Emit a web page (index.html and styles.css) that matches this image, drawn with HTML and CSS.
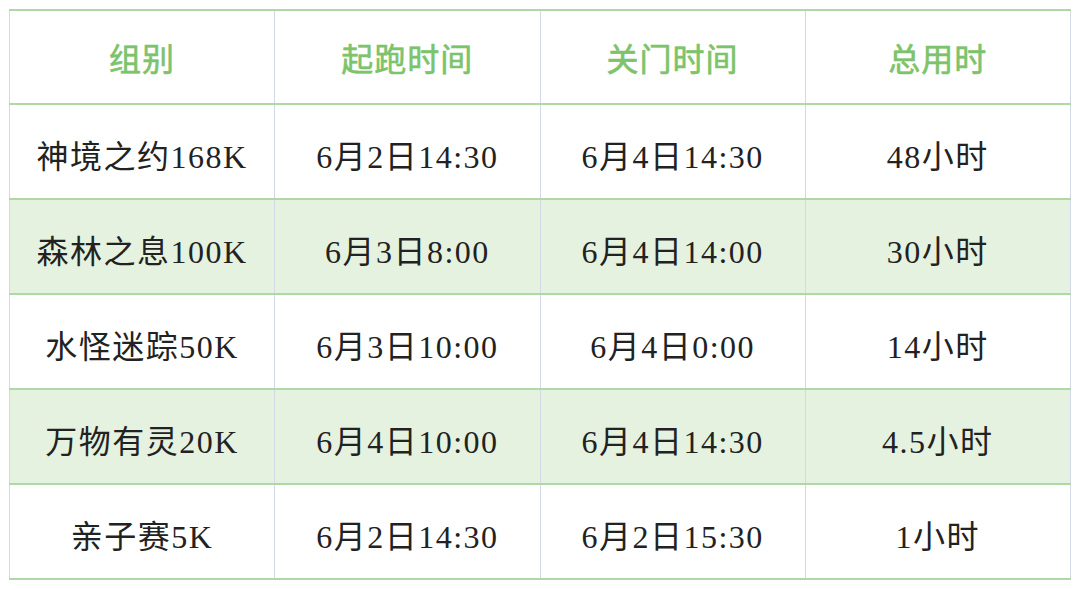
FILE: index.html
```html
<!DOCTYPE html>
<html lang="zh-CN">
<head>
<meta charset="utf-8">
<link rel="stylesheet" href="styles.css">
</head>
<body>
<table class="schedule">
  <thead>
    <tr><th>组别</th><th>起跑时间</th><th>关门时间</th><th>总用时</th></tr>
  </thead>
  <tbody>
    <tr><td>神境之约168K</td><td>6月2日14:30</td><td>6月4日14:30</td><td>48小时</td></tr>
    <tr class="alt"><td>森林之息100K</td><td>6月3日8:00</td><td>6月4日14:00</td><td>30小时</td></tr>
    <tr><td>水怪迷踪50K</td><td>6月3日10:00</td><td>6月4日0:00</td><td>14小时</td></tr>
    <tr class="alt"><td>万物有灵20K</td><td>6月4日10:00</td><td>6月4日14:30</td><td>4.5小时</td></tr>
    <tr><td>亲子赛5K</td><td>6月2日14:30</td><td>6月2日15:30</td><td>1小时</td></tr>
  </tbody>
</table>
</body>
</html>
```
FILE: styles.css
```css
html, body {
  margin: 0;
  background: #ffffff;
}
body {
  padding: 9px 9px 0 9px;
}
.schedule {
  border-collapse: collapse;
  table-layout: fixed;
  width: 1062px;
  font-family: "Liberation Serif", "Noto Sans CJK SC", serif;
  font-size: 32px;
  color: #222222;
}
.schedule th,
.schedule td {
  width: 25%;
  text-align: center;
  vertical-align: middle;
  border-left: 1px solid #d3d8e6;
  border-right: 1px solid #d3d8e6;
  border-top: 2px solid #b0d8a6;
  border-bottom: 2px solid #b0d8a6;
  padding: 0;
  letter-spacing: 1.5px;
}
.schedule th {
  height: 92px;
  color: #7cc36b;
  font-weight: normal;
  -webkit-text-stroke: 0.6px #7cc36b;
  font-size: 32px;
  letter-spacing: 1px;
}
.schedule td {
  height: 89px;
  padding-top: 4px;
}
.schedule tr.alt td {
  background: #e5f2e0;
}
```
